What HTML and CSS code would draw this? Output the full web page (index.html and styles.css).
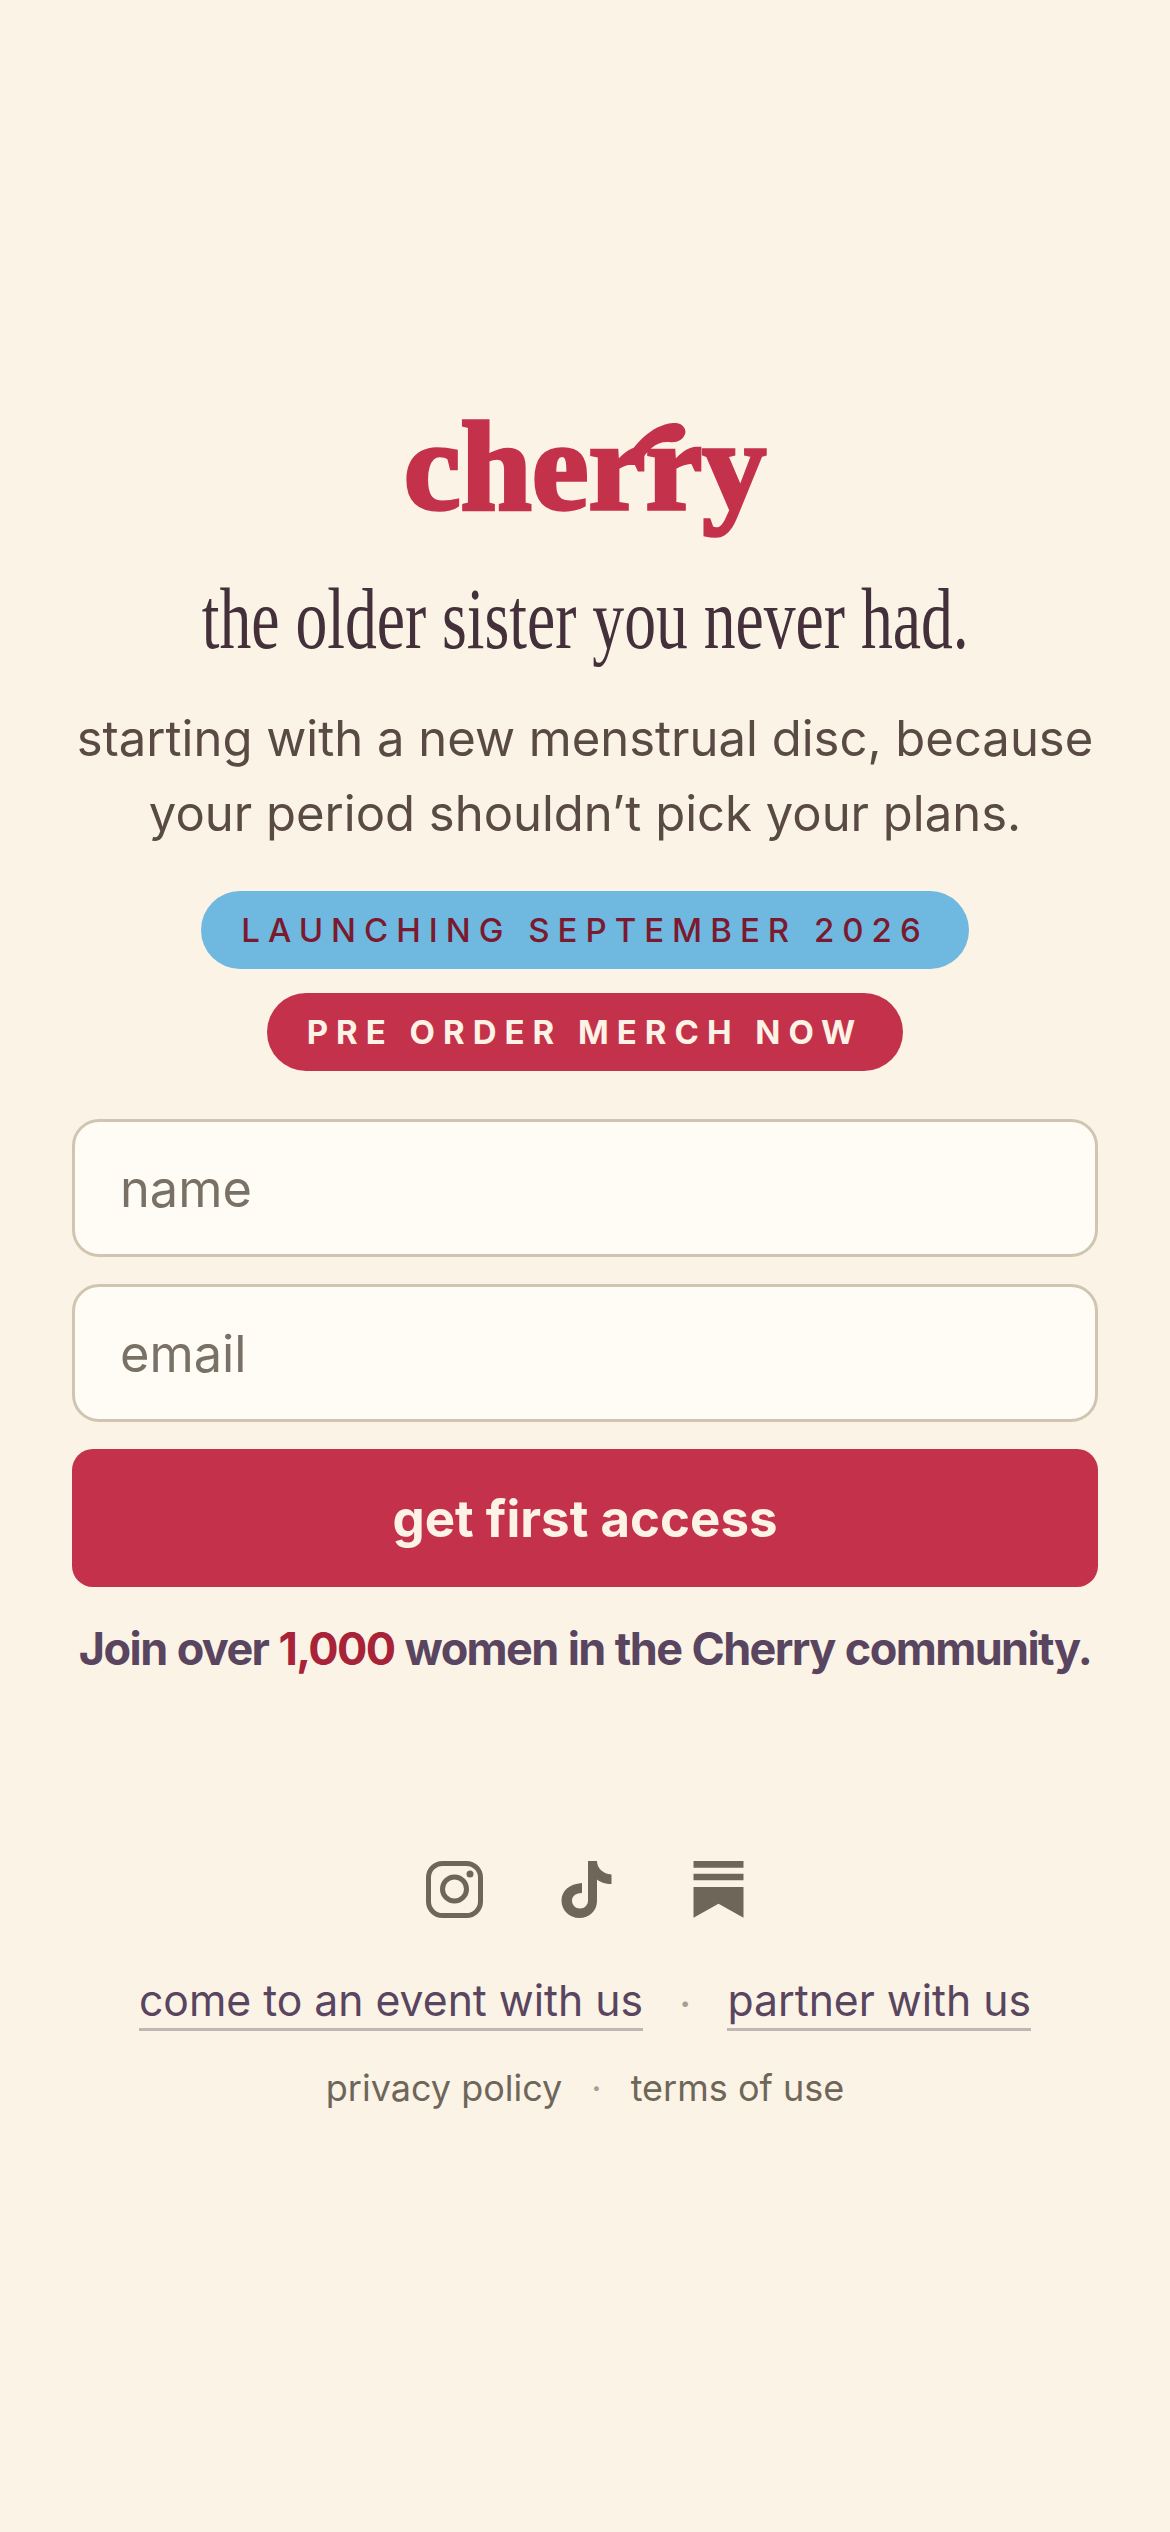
FILE: index.html
```html
<!DOCTYPE html>
<html lang="en">
<head>
    <meta charset="UTF-8">
    <meta name="viewport" content="width=device-width, initial-scale=1.0">
    <title>cherry</title>
    <link rel="stylesheet" href="styles.css">
</head>
<body>
    <main class="page">
        <div class="logo">
            <span class="logo-text">cherry</span>
            <svg class="logo-swash" viewBox="0 0 75 45" aria-hidden="true">
                <path d="M4 42C14 22 32 2 54 0C63 -1 68 6 66 11C64 17 58 20 50 19C38 18 28 26 20 42Z"/>
            </svg>
        </div>

        <h1 class="headline"><span>the older sister you never had.</span></h1>
        <p class="sub">starting with a new menstrual disc, because your period shouldn’t pick your plans.</p>

        <div class="pill pill-blue">LAUNCHING SEPTEMBER 2026</div>
        <a class="pill pill-red" href="#">PRE ORDER MERCH NOW</a>

        <form class="signup">
            <input type="text" name="name" placeholder="name">
            <input type="email" name="email" placeholder="email">
            <button type="submit">get first access</button>
        </form>

        <p class="join">Join over <span class="count">1,000</span> women in the Cherry community.</p>

        <div class="socials">
            <!-- instagram -->
            <svg viewBox="0 0 60 60" aria-hidden="true">
                <rect x="5.500" y="4.500" width="52" height="52" rx="14" class="line"/>
                <circle cx="31.500" cy="30" r="12" class="line"/>
                <circle cx="47" cy="15" r="3.500" class="solid"/>
            </svg>
            <!-- tiktok -->
            <svg viewBox="0 0 60 60" aria-hidden="true">
                <path class="solid" d="M33 2H42C42 9 48 15 56.500 15.500V25C50 25 45 23 42 20.500V42C42 52 34 59 24.500 59C14 59 6.500 51 6.500 41.500C6.500 32 14 25 27 24V34C21 34 17 37 17 41.500C17 46 20.500 49.500 25 49.500C29.500 49.500 33 46 33 41.500Z"/>
            </svg>
            <!-- substack -->
            <svg viewBox="0 0 60 60" aria-hidden="true">
                <path class="solid" d="M6.500 2H56.500V8.700H6.500ZM6.500 14.700H56.500V21.300H6.500ZM6.500 28H56.500V58.700L31.500 44.700L6.500 58.700Z"/>
            </svg>
        </div>

        <nav class="links">
            <a href="#">come to an event with us</a>
            <span class="dot">·</span>
            <a href="#">partner with us</a>
        </nav>

        <nav class="legal">
            <a href="#">privacy policy</a>
            <span class="dot">·</span>
            <a href="#">terms of use</a>
        </nav>
    </main>
</body>
</html>
```

FILE: styles.css
```css
* {
    box-sizing: border-box;
}
body {
    margin: 0;
    background-color: #fbf4e6;
    font-family: Inter, "Noto Sans", sans-serif;
}
a {
    text-decoration: none;
}
.page {
    min-height: 2532px;
    padding: 405px 72px 0;
    display: flex;
    flex-direction: column;
    align-items: center;
    overflow: hidden;
}

/* logo */
.logo {
    position: relative;
    height: 130px;
    width: 362px;
    display: flex;
    justify-content: center;
}
.logo-text {
    display: block;
    font-family: "Liberation Serif", serif;
    font-weight: 700;
    font-size: 128px;
    line-height: 122px;
    color: #c4314b;
    -webkit-text-stroke: 3.5px #c4314b;
}
.logo-swash {
    position: absolute;
    left: 215px;
    top: 18px;
    width: 75px;
    height: 45px;
    fill: #c4314b;
}

.headline {
    margin: 38px 0 0;
    height: 92px;
    font-family: "Liberation Serif", serif;
    font-weight: 400;
    font-size: 86px;
    line-height: 92px;
    color: #43303a;
    white-space: nowrap;
    display: flex;
    justify-content: center;
}
.headline span {
    display: block;
    transform: scaleX(0.74);
}
.sub {
    margin: 36px 0 0;
    font-size: 49px;
    line-height: 75px;
    text-align: center;
    color: #5a4a44;
}

/* pills */
.pill {
    height: 78px;
    border-radius: 39px;
    display: flex;
    align-items: center;
    justify-content: center;
    font-size: 33px;
    white-space: nowrap;
}
.pill-blue {
    margin-top: 40px;
    width: 768px;
    background-color: #6fb8e0;
    color: #7a1a2e;
    font-weight: 500;
    letter-spacing: 8px;
}
.pill-red {
    margin-top: 24px;
    width: 636px;
    background-color: #c4314b;
    color: #fcf3e6;
    font-weight: 700;
    letter-spacing: 8px;
}

/* form */
.signup {
    margin-top: 48px;
    width: 100%;
    display: flex;
    flex-direction: column;
    gap: 27px;
}
.signup input {
    height: 138px;
    padding: 0 45px;
    border: 3px solid #cfc5b0;
    border-radius: 27px;
    background-color: #fffcf5;
    font-family: inherit;
    font-size: 50.5px;
    color: #5a4a44;
}
.signup input::placeholder {
    color: #7a7166;
    opacity: 1;
}
.signup button {
    height: 138px;
    border: none;
    border-radius: 21px;
    background-color: #c4314b;
    color: #fcf3e6;
    font-family: inherit;
    font-weight: 700;
    font-size: 51px;
}
.join {
    margin: 32px 0 0;
    font-size: 45px;
    line-height: 60px;
    font-weight: 700;
    letter-spacing: -1.6px;
    word-spacing: 1px;
    color: #5a4560;
    white-space: nowrap;
}
.count {
    color: #a82238;
}

/* footer */
.socials {
    margin-top: 180px;
    display: flex;
    gap: 72px;
}
.socials svg {
    width: 60px;
    height: 60px;
}
.socials .line {
    fill: none;
    stroke: #6f665a;
    stroke-width: 5px;
}
.socials .solid {
    fill: #6f665a;
}
.links {
    margin-top: 56px;
    display: flex;
    align-items: center;
    gap: 36px;
    font-size: 42.7px;
}
.links a {
    color: #5a4560;
    padding-bottom: 2px;
    border-bottom: 3px solid #c2b6b4;
}
.dot {
    color: #a89e92;
}
.legal {
    margin-top: 35px;
    display: flex;
    align-items: center;
    gap: 29px;
    font-size: 36px;
}
.legal a {
    color: #6f665a;
}
```
